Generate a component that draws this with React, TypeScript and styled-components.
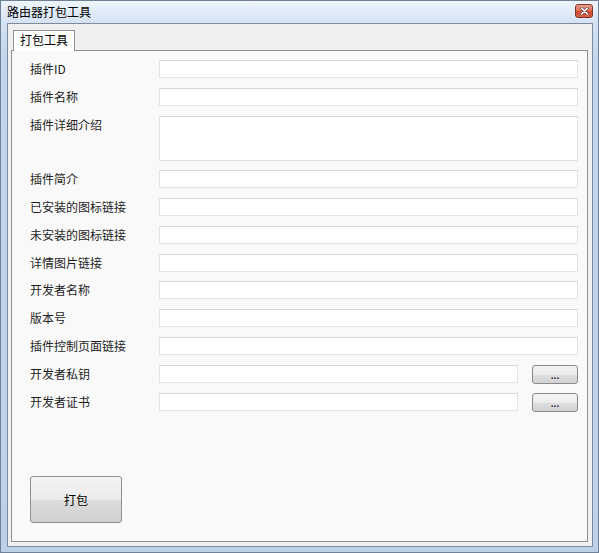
import { FC } from 'react';
import styled, { createGlobalStyle } from 'styled-components';

const fields = [
  '插件ID',
  '插件名称',
  '插件详细介绍',
  '插件简介',
  '已安装的图标链接',
  '未安装的图标链接',
  '详情图片链接',
  '开发者名称',
  '版本号',
  '插件控制页面链接',
  '开发者私钥',
  '开发者证书',
];

const multiline = ['插件详细介绍'];
const withBrowse = ['开发者私钥', '开发者证书'];

const App: FC = () => {
  return (
    <>
      <GlobalStyle />
      <Window>
        <TitleBar>
          <Title>路由器打包工具</Title>
          <CloseButton>
            <svg width="9" height="8" viewBox="0 0 9 8">
              <path d="M1.5 1 L7.5 7 M7.5 1 L1.5 7" stroke="#6a4038" strokeWidth="3" strokeLinecap="round" />
              <path d="M1.5 1 L7.5 7 M7.5 1 L1.5 7" stroke="#ffffff" strokeWidth="1.6" strokeLinecap="round" />
            </svg>
          </CloseButton>
        </TitleBar>

        <Client>
          <TabStrip>
            <Tab>打包工具</Tab>
          </TabStrip>
          <TabPanel>
            <Form>
              {fields.map((label) => (
                <Row key={label}>
                  <Label>{label}</Label>
                  <Field>
                    {multiline.includes(label) ? <TextArea /> : <TextBox />}
                    {withBrowse.includes(label) && <BrowseButton>...</BrowseButton>}
                  </Field>
                </Row>
              ))}
            </Form>
            <PackButton>打包</PackButton>
          </TabPanel>
        </Client>
      </Window>
    </>
  );
};

export default App;

const GlobalStyle = createGlobalStyle`
  html, body {
    margin: 0;
    padding: 0;
    background: #ffffff;
  }
  * {
    box-sizing: border-box;
  }
`;

const Window = styled.div`
  width: 599px;
  height: 553px;
  display: flex;
  flex-direction: column;
  border: 1px solid #6f8197;
  background: linear-gradient(180deg, #eef4fb 0px, #d3e2f3 22px, #c2d5ec 60px, #bcd0e8 100%);
  font-family: 'Noto Sans CJK SC', 'Noto Sans', sans-serif;
`;

const TitleBar = styled.div`
  height: 22px;
  display: flex;
  justify-content: space-between;
  align-items: center;
  padding: 0 5px 0 6px;
`;

const Title = styled.span`
  font-size: 12px;
  color: #000000;
  line-height: 22px;
`;

const CloseButton = styled.div`
  width: 18px;
  height: 14px;
  align-self: flex-start;
  margin-top: 3px;
  display: flex;
  align-items: center;
  justify-content: center;
  border: 1px solid #7a3426;
  border-radius: 3px;
  background: linear-gradient(180deg, #ee9f8c 0%, #de7058 45%, #cf4a2f 55%, #d8644a 100%);
  box-shadow: 0 0 2px rgba(255, 255, 255, 0.8);
`;

const Client = styled.div`
  flex: 1;
  display: flex;
  flex-direction: column;
  margin: 0 5px 5px 6px;
  padding: 6px 4px 4px 3px;
  border: 1px solid #7f8b99;
  background: #f0f0f0;
`;

const TabStrip = styled.div`
  display: flex;
  padding-left: 2px;
  height: 20px;
`;

const Tab = styled.div`
  position: relative;
  z-index: 1;
  height: 21px;
  padding: 0 6px;
  border: 1px solid #8d9098;
  border-bottom: none;
  background: #ffffff;
  font-size: 12px;
  line-height: 18px;
  color: #000000;
`;

const TabPanel = styled.div`
  flex: 1;
  display: flex;
  flex-direction: column;
  padding: 9px 9px 18px 18px;
  border: 1px solid #8d9098;
  background: #f9f9f9;
`;

const Form = styled.div`
  display: flex;
  flex-direction: column;
  gap: 9.75px;
`;

const Row = styled.div`
  display: grid;
  grid-template-columns: 129px 1fr;
  align-items: start;
`;

const Label = styled.span`
  font-size: 12px;
  line-height: 17px;
  color: #1e1e1e;
  white-space: nowrap;
`;

const Field = styled.div`
  display: flex;
  align-items: start;
  gap: 14px;
`;

const TextBox = styled.div`
  flex: 1;
  height: 18px;
  border: 1px solid #e2e3e6;
  border-top-color: #d6d7da;
  background: #ffffff;
`;

const TextArea = styled(TextBox)`
  height: 45px;
`;

const BrowseButton = styled.div`
  width: 46px;
  height: 19px;
  display: flex;
  align-items: center;
  justify-content: center;
  border: 1px solid #8a8a8a;
  border-radius: 3px;
  background: linear-gradient(180deg, #f4f4f4 0%, #ececec 50%, #dedede 51%, #d2d2d2 100%);
  font-family: 'Liberation Sans', Arial, sans-serif;
  font-size: 10px;
  font-weight: 700;
  line-height: 19px;
  color: #333333;
  padding-top: 2px;
`;

const PackButton = styled.div`
  margin-top: auto;
  width: 92px;
  height: 47px;
  display: flex;
  align-items: center;
  justify-content: center;
  border: 1px solid #8f8f8f;
  border-radius: 3px;
  background: linear-gradient(180deg, #f3f3f3 0%, #ebebeb 50%, #dddddd 51%, #d0d0d0 100%);
  font-size: 12px;
  color: #000000;
`;
